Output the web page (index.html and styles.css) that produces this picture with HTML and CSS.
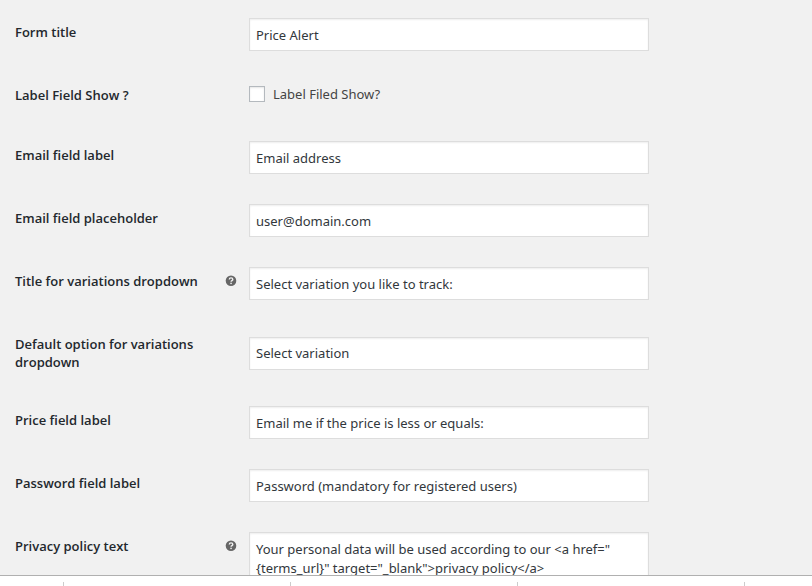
FILE: index.html
```html
<!DOCTYPE html>
<html lang="en">
<head>
<meta charset="utf-8">
<title>Price Alert settings</title>
<link rel="stylesheet" href="styles.css">
</head>
<body>
<svg class="sprite" aria-hidden="true">
  <symbol id="help" viewBox="0 0 12 12">
    <circle cx="6" cy="5.7" r="5.3" fill="#666"/>
    <path d="M4.3 4.4C4.3 2.4 7.8 2.4 7.8 4.4C7.8 5.6 6.1 5.6 6.1 6.8" fill="none" stroke="#f1f1f1" stroke-width="1.4"/>
    <rect x="5.3" y="7.7" width="1.5" height="1.4" fill="#f1f1f1"/>
  </symbol>
</svg>
<form class="settings">
  <div class="row">
    <label class="name" for="form-title">Form title</label>
    <input class="field" type="text" id="form-title" value="Price Alert">
  </div>
  <div class="row row-check">
    <span class="name">Label Field Show ?</span>
    <label class="check"><input class="box" type="checkbox">Label Filed Show?</label>
  </div>
  <div class="row">
    <label class="name" for="email-label">Email field label</label>
    <input class="field" type="text" id="email-label" value="Email address">
  </div>
  <div class="row">
    <label class="name" for="email-placeholder">Email field placeholder</label>
    <input class="field" type="text" id="email-placeholder" value="user@domain.com">
  </div>
  <div class="row">
    <label class="name" for="variation-title">Title for variations dropdown</label>
    <svg class="help"><use href="#help"/></svg>
    <input class="field" type="text" id="variation-title" value="Select variation you like to track:">
  </div>
  <div class="row">
    <label class="name" for="variation-default">Default option for variations dropdown</label>
    <input class="field" type="text" id="variation-default" value="Select variation">
  </div>
  <div class="row">
    <label class="name" for="price-label">Price field label</label>
    <input class="field" type="text" id="price-label" value="Email me if the price is less or equals:">
  </div>
  <div class="row">
    <label class="name" for="password-label">Password field label</label>
    <input class="field" type="text" id="password-label" value="Password (mandatory for registered users)">
  </div>
  <div class="row">
    <label class="name" for="privacy-text">Privacy policy text</label>
    <svg class="help"><use href="#help"/></svg>
    <textarea class="field area" id="privacy-text" rows="3">Your personal data will be used according to our &lt;a href="{terms_url}" target="_blank"&gt;privacy policy&lt;/a&gt;</textarea>
  </div>
</form>
<div class="strip">
  <span class="cell first"></span><span class="cell"></span><span class="cell"></span><span class="cell"></span>
</div>
</body>
</html>
```
FILE: styles.css
```css
* {
  box-sizing: border-box;
}

body {
  display: flex;
  flex-direction: column;
  height: 100vh;
  margin: 0;
  overflow: hidden;
  background: #f1f1f1;
  color: #444;
  font: 13px/18px "Noto Sans", "Open Sans", sans-serif;
}

.sprite {
  position: absolute;
  width: 0;
  height: 0;
}

.settings {
  flex: 1;
  min-height: 0;
  overflow: hidden;
  padding: 3px 15px 0;
}

.row {
  display: grid;
  grid-template-columns: 200px 34px minmax(0, 400px);
  align-items: center;
}

.name {
  grid-column: 1;
  align-self: start;
  padding: 20px 0;
  color: #23282d;
  font-family: "Open Sans", "Noto Sans", sans-serif;
  font-weight: 600;
}

.row-check {
  height: 60px;
}

.help {
  grid-column: 2;
  align-self: start;
  width: 12px;
  height: 12px;
  margin: 23px 0 0 10px;
}

.field {
  grid-column: 3;
  width: 100%;
  height: 33px;
  margin: 15px 0;
  padding: 0 6px;
  border: 1px solid #ddd;
  border-radius: 0;
  background: #fff;
  box-shadow: inset 0 1px 2px rgba(0, 0, 0, 0.07);
  color: #32373c;
  font: inherit;
}

.area {
  height: 75px;
  padding: 7px 6px;
  line-height: 19px;
  resize: none;
  word-break: break-word;
  overflow: hidden;
}

.check {
  grid-column: 3;
  display: flex;
  align-items: center;
  gap: 8px;
  padding-bottom: 4px;
}

.box {
  appearance: none;
  width: 16px;
  height: 16px;
  margin: 0;
  border: 1px solid #b4b9be;
  background: #fff;
  box-shadow: inset 0 1px 2px rgba(0, 0, 0, 0.1);
}

.strip {
  display: flex;
  flex: none;
  height: 11px;
  padding-top: 6px;
  border-top: 1px solid #b0b0b0;
  background: #fff;
}

.cell {
  flex: none;
  width: 227px;
  border-right: 1px solid #ccc;
}

.first {
  width: 64px;
}
```
